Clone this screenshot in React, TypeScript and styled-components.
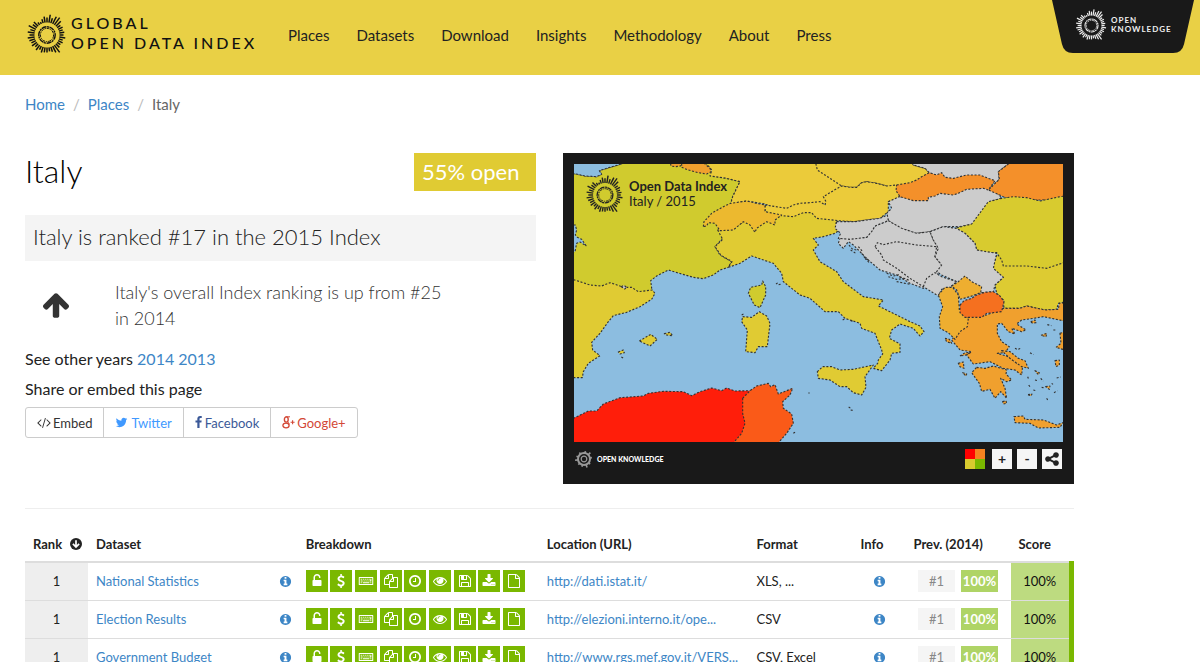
import React from 'react';
import styled, { createGlobalStyle } from 'styled-components';

const GlobalStyle = createGlobalStyle`
  *, *::before, *::after { box-sizing: border-box; }
  body {
    margin: 0;
    background: #fff;
    color: #222;
    font-family: Lato, 'Liberation Sans', sans-serif;
    font-size: 16px;
    line-height: 24px;
  }
  a { color: #3d86c6; text-decoration: none; }
  a:hover { text-decoration: underline; }
  h1, h2, p { margin: 0; }
`;

/* ---------- icons ---------- */

const glyphs = {
  info: 'M1152 1376v-160q0-14-9-23t-23-9h-96v-512q0-14-9-23t-23-9h-320q-14 0-23 9t-9 23v160q0 14 9 23t23 9h96v320h-96q-14 0-23 9t-9 23v160q0 14 9 23t23 9h448q14 0 23-9t9-23zm-128-896v-160q0-14-9-23t-23-9h-192q-14 0-23 9t-9 23v160q0 14 9 23t23 9h192q14 0 23-9t9-23zm640 416q0 209-103 385.5t-279.5 279.5-385.5 103-385.5-103-279.5-279.5-103-385.5 103-385.5 279.5-279.5 385.5-103 385.5 103 279.5 279.5 103 385.5z',
  up: 'M1675 971q0 51-37 90l-75 75q-38 38-91 38-54 0-90-38l-294-293v704q0 52-37.5 84.5t-90.5 32.5h-128q-53 0-90.5-32.5t-37.5-84.5v-704l-294 293q-36 38-90 38t-90-38l-75-75q-38-38-38-90 0-53 38-91l651-651q35-37 90-37 54 0 91 37l651 651q37 39 37 91z',
  twitter: 'M1684 408q-67 98-162 167 1 14 1 42 0 130-38 259.5t-115.5 248.5-184.5 210.5-258 146-323 54.5q-271 0-496-145 35 4 78 4 225 0 401-138-105-2-188-64.5t-114-159.5q33 5 61 5 43 0 85-11-112-23-185.5-111.5t-73.5-205.5v-4q68 38 146 41-66-44-105-115t-39-154q0-88 44-163 121 149 294.5 238.5t371.5 99.5q-8-38-8-74 0-134 94.5-228.5t228.5-94.5q140 0 236 102 109-21 205-78-37 115-142 178 93-10 186-50z',
  facebook: 'M1343 12v264h-157q-86 0-116 36t-30 108v189h293l-39 296h-254v759h-306v-759h-255v-296h255v-218q0-186 104-288.5t277-102.5q147 0 228 12z',
  share: 'M1344 1024q133 0 226.5 93.5t93.5 226.5-93.5 226.5-226.5 93.5-226.5-93.5-93.5-226.5q0-12 2-34l-360-180q-92 86-218 86-133 0-226.5-93.5t-93.5-226.5 93.5-226.5 226.5-93.5q126 0 218 86l360-180q-2-22-2-34 0-133 93.5-226.5t226.5-93.5 226.5 93.5 93.5 226.5-93.5 226.5-226.5 93.5q-126 0-218-86l-360 180q2 22 2 34t-2 34l360 180q92-86 218-86z',
  code: 'M617 1399l-50 50q-10 10-23 10t-23-10l-466-466q-10-10-10-23t10-23l466-466q10-10 23-10t23 10l50 50q10 10 10 23t-10 23l-393 393 393 393q10 10 10 23t-10 23zm591-1067l-373 1291q-4 13-15.5 19.5t-23.5 2.5l-62-17q-13-4-19.5-15.5t-2.5-24.5l373-1291q4-13 15.5-19.5t23.5-2.5l62 17q13 4 19.5 15.5t2.5 24.5zm657 651l-466 466q-10 10-23 10t-23-10l-50-50q-10-10-10-23t10-23l393-393-393-393q-10-10-10-23t10-23l50-50q10-10 23-10t23 10l466 466q10 10 10 23t-10 23z',
  unlock: 'M1376 768q40 0 68 28t28 68v576q0 40-28 68t-68 28h-960q-40 0-68-28t-28-68v-576q0-40 28-68t68-28h32v-320q0-185 131.5-316.5t316.5-131.5 316.5 131.5 131.5 316.5q0 26-19 45t-45 19h-64q-26 0-45-19t-19-45q0-106-75-181t-181-75-181 75-75 181v320h736z',
  dollar: 'M1362 1185q0 153-99.5 263.5t-258.5 136.5v175q0 14-9 23t-23 9h-135q-13 0-22.5-9.5t-9.5-22.5v-175q-66-9-127.5-31t-101.5-44.5-74-48-46.5-37.5-17.5-18q-17-21-2-41l103-135q7-10 23-12 15-2 24 9l2 2q113 99 243 125 37 8 74 8 81 0 142.5-43t61.5-122q0-28-15-53t-33.5-42-58.5-37.5-66-32-80-32.5q-39-16-61.5-25t-61.5-26.5-62.5-31-56.5-35.5-53.5-42.5-43.5-49-35.5-58-21-66.5-8.5-78q0-138 98-242t255-134v-180q0-13 9.5-22.5t22.5-9.5h135q14 0 23 9t9 23v176q57 6 110.5 23t87 33.5 63.5 37.5 39 29 15 14q17 18 5 38l-81 146q-8 15-23 16-14 3-27-7-3-3-14.5-12t-39-26.5-58.5-32-74.5-26-85.5-11.5q-95 0-155 43t-60 111q0 26 8.5 48t29.5 41.5 39.5 33 56 31 60.5 27 70 27.5q53 20 81 31.5t76 35 75.5 42.5 62 50 53 63.5 31.5 76.5 13 94z',
  keyboard: 'M-30 448q0-64 64-64h1724q64 0 64 64v896q0 64-64 64h-1724q-64 0-64-64zm128 64v768h1596v-768zM220 600h140v130h-140zM480 600h130v130h-130zM730 600h130v130h-130zM980 600h130v130h-130zM1230 600h130v130h-130zM1450 600h130v360h-240v-130h110zM220 830h240v130h-240zM590 830h130v130h-130zM840 830h130v130h-130zM1090 830h130v130h-130zM220 1060h140v130h-140zM480 1060h850v130h-850zM1440 1060h140v130h-140z',
  files: 'M1696 384q40 0 68 28t28 68v1216q0 40-28 68t-68 28h-960q-40 0-68-28t-28-68v-288h-544q-40 0-68-28t-28-68v-672q0-40 20-88t48-76l408-408q28-28 76-48t88-20h416q40 0 68 28t28 68v328q68-40 128-40h416zm-544 213l-299 299h299v-299zm-640-384l-299 299h299v-299zm196 647l316-316v-416h-384v416q0 40-28 68t-68 28h-416v640h512v-256q0-40 20-88t48-76zm956 804v-1152h-384v416q0 40-28 68t-68 28h-416v640h896z',
  clock: 'M1024 544v448q0 14-9 23t-23 9h-320q-14 0-23-9t-9-23v-64q0-14 9-23t23-9h224v-352q0-14 9-23t23-9h64q14 0 23 9t9 23zm416 352q0-148-73-273t-198-198-273-73-273 73-198 198-73 273 73 273 198 198 273 73 273-73 198-198 73-273zm224 0q0 209-103 385.5t-279.5 279.5-385.5 103-385.5-103-279.5-279.5-103-385.5 103-385.5 279.5-279.5 385.5-103 385.5 103 279.5 279.5 103 385.5z',
  eye: 'M1664 960q-152-236-381-353 61 104 61 225 0 185-131.5 316.5t-316.5 131.5-316.5-131.5-131.5-316.5q0-121 61-225-229 117-381 353 133 205 333.5 326.5t434.5 121.5 434.5-121.5 333.5-326.5zm-720-384q0-20-14-34t-34-14q-125 0-214.5 89.5t-89.5 214.5q0 20 14 34t34 14 34-14 14-34q0-86 61-147t147-61q20 0 34-14t14-34zm848 384q0 34-20 69-140 230-376.5 368.5t-499.5 138.5-499.5-139-376.5-368q-20-35-20-69t20-69q140-229 376.5-368t499.5-139 499.5 139 376.5 368q20 35 20 69z',
  floppy: 'M512 1536h768v-384h-768v384zm896 0h128v-896q0-14-10-38.5t-20-34.5l-281-281q-10-10-34-20t-39-10v416q0 40-28 68t-68 28h-576q-40 0-68-28t-28-68v-416h-128v1280h128v-416q0-40 28-68t68-28h832q40 0 68 28t28 68v416zm-384-928v-320q0-13-9.5-22.5t-22.5-9.5h-192q-13 0-22.5 9.5t-9.5 22.5v320q0 13 9.5 22.5t22.5 9.5h192q13 0 22.5-9.5t9.5-22.5zm640 32v928q0 40-28 68t-68 28h-1344q-40 0-68-28t-28-68v-1344q0-40 28-68t68-28h928q40 0 88 20t76 48l280 280q28 28 48 76t20 88z',
  download: 'M1344 1344q0-26-19-45t-45-19-45 19-19 45 19 45 45 19 45-19 19-45zm256 0q0-26-19-45t-45-19-45 19-19 45 19 45 45 19 45-19 19-45zm128-224v320q0 40-28 68t-68 28h-1472q-40 0-68-28t-28-68v-320q0-40 28-68t68-28h465l135 136q58 56 136 56t136-56l136-136h464q40 0 68 28t28 68zm-325-569q17 41-14 70l-448 448q-18 19-45 19t-45-19l-448-448q-31-29-14-70 17-39 59-39h256v-448q0-26 19-45t45-19h256q26 0 45 19t19 45v448h256q42 0 59 39z',
  file: 'M1596 380q28 28 48 76t20 88v1152q0 40-28 68t-68 28h-1344q-40 0-68-28t-28-68v-1600q0-40 28-68t68-28h896q40 0 88 20t76 48zm-444-244v376h376q-10-29-22-41l-313-313q-12-12-41-22zm384 1528v-1024h-416q-40 0-68-28t-28-68v-416h-768v1536h1280z',
};

type GlyphName = keyof typeof glyphs;

const Svg = styled.svg<{ $size: number; $width?: number }>`
  display: block;
  flex: none;
  width: ${(p) => p.$width ?? p.$size}px;
  height: ${(p) => p.$size}px;
  fill: currentColor;
  overflow: visible;
`;

const Icon = ({ name, size, width }: { name: GlyphName; size: number; width?: number }) => (
  <Svg $size={size} $width={width} viewBox="0 0 1792 1792" preserveAspectRatio="xMidYMid slice" aria-hidden="true">
    <path fillRule="evenodd" d={glyphs[name]} />
  </Svg>
);

const SortDown = () => (
  <Svg $size={12} viewBox="0 0 12 12" aria-hidden="true">
    <circle cx="6" cy="6" r="6" />
    <path d="M6 2.2V9M2.9 5.8 6 9l3.1-3.2" fill="none" stroke="#fff" strokeWidth="1.7" />
  </Svg>
);

const GoogleMark = () => (
  <Svg $size={13} $width={12} viewBox="0 0 12 13" aria-hidden="true">
    <g fill="none" stroke="currentColor">
      <ellipse cx="4.3" cy="3.5" rx="1.9" ry="2.6" strokeWidth="1.4" />
      <path d="M3.6 .8H8M5.5 5.8q1.8 1.4 1.8 2.6" strokeWidth="1" />
      <ellipse cx="4" cy="9.5" rx="3.1" ry="2.3" strokeWidth="1.3" />
      <path d="M8.6 6.2h4M10.6 4.2v4" strokeWidth="1.1" />
    </g>
  </Svg>
);

const rays = [5, 8, 5, 8, 9, 7, 4, 5, 4, 5, 4, 6, 4, 5, 4, 5, 9, 7, 5, 4, 5, 5, 6, 4, 6, 4, 6, 5, 6, 7, 5, 7, 5, 8, 5, 6, 3, 2, 4, 6];

const Sunburst = ({ size }: { size: number }) => (
  <Svg $size={size} viewBox="-22 -22 44 44" aria-hidden="true">
    <g fill="none" stroke="currentColor">
      <circle r="8.2" strokeWidth="1.4" strokeDasharray="5 .7 2 .5" />
      <circle r="6.6" strokeWidth="1" strokeDasharray="3 .9 1.4 .8" />
      {rays.map((length, i) => (
        <path key={i} d={`M0 -12.5V${-12.5 - length}`} strokeWidth="1.5" transform={`rotate(${(i * 360) / rays.length})`} />
      ))}
    </g>
  </Svg>
);

const GearMark = () => (
  <Svg $size={18} viewBox="-9 -9 18 18" aria-hidden="true">
    <g fill="none" stroke="currentColor">
      <circle r="6" strokeWidth="2" />
      <circle r="2.8" strokeWidth="1.2" />
      {[10, 45, 80, 130, 160, 195, 225, 262, 290, 325].map((a, i) => (
        <path key={a} d={`M0 -6V${i % 3 === 1 ? -9 : -8}`} strokeWidth="1.6" transform={`rotate(${a})`} />
      ))}
    </g>
  </Svg>
);

/* ---------- header ---------- */

const Header = styled.header`
  display: flex;
  align-items: flex-start;
  min-height: 75px;
  padding-left: 25px;
  background: #e9d045;
`;

const Brand = styled.a`
  display: flex;
  align-items: flex-start;
  gap: 2px;
  padding-top: 13px;
  color: #111;
  font-weight: 500;
  font-size: 16px;
  line-height: 20px;
  letter-spacing: 3px;
  white-space: nowrap;
`;

const Nav = styled.nav`
  display: flex;
  gap: 27px;
  margin-left: 31px;
  padding-top: 23px;
  font-size: 15px;
`;

const NavLink = styled.a`
  color: #222;
`;

const Tab = styled.a`
  position: relative;
  display: flex;
  align-items: center;
  width: 143px;
  height: 53px;
  margin: 0 5px 0 auto;
  padding: 0 0 3px 22px;
  color: #eee;
  font-size: 8px;
  font-weight: 700;
  line-height: 9px;
  letter-spacing: 1px;
`;

const TabShape = styled.svg`
  position: absolute;
  inset: 0;
  width: 100%;
  height: 100%;
`;

const TabContent = styled.span`
  position: relative;
  display: flex;
  align-items: center;
  gap: 2px;
`;

/* ---------- page ---------- */

const Page = styled.main`
  max-width: 1099px;
  padding: 0 25px;
`;

const Breadcrumb = styled.ol`
  display: flex;
  margin: 0;
  padding: 17px 0 1px;
  list-style: none;
  font-size: 15px;
`;

const Crumb = styled.li`
  color: #666;
  & + &::before {
    content: '/';
    padding: 0 8px;
    color: #bbb;
  }
`;

const Overview = styled.div`
  display: grid;
  grid-template-columns: 1fr 1fr;
  gap: 27px;
  align-items: start;
  padding: 36px 0 24px;
  border-bottom: 1px solid #eee;
`;

const TitleRow = styled.div`
  display: flex;
  justify-content: space-between;
  align-items: flex-start;
`;

const Title = styled.h1`
  color: #000;
  font-weight: 300;
  font-size: 32px;
  line-height: 36px;
`;

const OpenScore = styled.span`
  width: 122px;
  padding: 0 8px;
  background: #e0cb33;
  color: #fff;
  font-size: 22px;
  line-height: 38px;
`;

const RankBanner = styled.h2`
  margin-top: 24px;
  padding: 0 8px 2px;
  background: #f4f4f4;
  font-weight: 300;
  font-size: 22px;
  line-height: 44px;
`;

const Trend = styled.div`
  display: flex;
  align-items: center;
  gap: 44px;
  margin-top: 18px;
  padding-left: 16px;
  color: #333;
`;

const TrendText = styled.p`
  max-width: 340px;
  font-weight: 300;
  font-size: 18px;
  line-height: 26px;
`;

const Years = styled.p`
  margin-top: 16px;
`;

const ShareLabel = styled.p`
  margin-top: 6px;
`;

const ShareGroup = styled.div`
  display: inline-flex;
  margin-top: 6px;
  border: 1px solid #ccc;
  border-radius: 3px;
`;

const ShareButton = styled.button<{ $color: string }>`
  display: flex;
  align-items: center;
  gap: 3px;
  height: 29px;
  padding: 0 11px;
  border: 0;
  background: none;
  color: ${(p) => p.$color};
  font: inherit;
  font-size: 13px;
  cursor: pointer;
  & + & { border-left: 1px solid #ccc; }
`;

/* ---------- map ---------- */

const MapPanel = styled.section`
  position: relative;
  padding: 11px 11px 0;
  background: #191919;
`;

const MapSvg = styled.svg`
  display: block;
  width: 100%;
  background: #8cbde0;
`;

const MapCaption = styled.div`
  position: absolute;
  top: 21px;
  left: 21px;
  display: flex;
  align-items: center;
  gap: 3px;
  color: #222;
  font-size: 13px;
  line-height: 15px;
`;

const CaptionText = styled.span`
  padding-bottom: 3px;
`;

const MapFooter = styled.div`
  display: flex;
  align-items: center;
  gap: 5px;
  height: 42px;
  padding: 0 1px 8px;
`;

const FooterBrand = styled.a`
  display: flex;
  align-items: center;
  gap: 4px;
  margin-right: auto;
  color: #999;
  font-size: 7px;
  font-weight: 900;
  & > span { color: #fff; }
`;

const MapButton = styled.button`
  display: grid;
  place-items: center;
  width: 20px;
  height: 20px;
  padding: 0;
  border: 0;
  background: #f5f5f5;
  color: #222;
  font: inherit;
  font-size: 14px;
  font-weight: 700;
  line-height: 20px;
`;

const LegendButton = styled(MapButton)`
  margin-right: 2px;
  background: conic-gradient(#f58220 90deg, #7ab800 90deg 180deg, #d8cb2f 180deg 270deg, #ff0000 270deg);
`;

const yellow = '#e0cb33';
const olive = '#d0cb2e';
const gold = '#ebcb3a';
const amber = '#f0a02e';
const grey = '#cccccc';
const sea = '#8cbde0';

const lands: [string, string][] = [
  [olive, '30,68 75,78 110,80 125,73 118,62 150,52 190,40 190,30 440,30 460,78 500,85 540,95 530,115 518,140 512,162 560,155 560,250 488,265 465,290 480,315 515,335 505,352 480,360 460,375 430,386 400,382 365,372 325,360 290,378 272,392 277,430 250,460 30,460'],
  [sea, '30,225 46,225 50,240 46,255 52,262 65,268 78,287 60,276 50,280 45,305 30,308'],
  [yellow, '30,386 60,395 90,405 125,408 150,398 180,408 195,412 215,412 235,425 277,420 285,430 275,448 240,470 200,487 160,497 145,515 120,550 95,577 98,600 120,617 85,640 70,665 67,683 30,683'],
  [yellow, '473,240 488,268 465,290 482,315 516,335 505,352 540,340 575,318 640,340 665,370 670,395 720,435 750,445 795,485 835,485 855,505 900,520 905,535 945,550 965,600 968,612 955,630 953,640 940,655 965,662 990,630 995,610 1020,607 1020,582 988,565 995,540 1020,522 1060,535 1080,558 1092,545 1080,528 1050,515 990,485 955,468 970,450 910,440 850,395 830,365 780,335 760,300 775,285 760,265 790,260 825,250 838,240 828,220 840,190 620,170 520,235'],
  [gold, '430,30 455,60 450,78 500,85 540,95 530,115 518,140 512,162 560,153 615,162 680,190 755,180 820,150 860,100 780,30'],
  [amber, '330,30 333,48 345,50 362,48 365,30'],
  [amber, '365,30 365,52 385,60 415,68 440,72 453,65 450,55 435,42 435,30'],
  [gold, '765,30 772,60 810,85 845,108 870,112 890,112 905,98 920,95 950,100 980,108 1010,115 1060,100 1108,68 1095,55 1060,45 1045,30'],
  [gold, '615,165 680,175 700,165 720,160 750,158 780,155 795,165 798,155 790,140 820,122 845,108 870,112 890,112 905,98 920,95 950,100 980,108 1010,105 1018,140 1005,150 985,155 985,185 960,205 920,210 885,215 845,213 770,205 755,188 730,188 700,200 640,195 615,185'],
  ['#ecb92f', '430,230 432,215 455,190 490,170 512,160 560,153 590,160 615,165 615,185 665,195 645,210 645,225 620,215 600,228 590,235 585,247 570,225 550,215 520,240 480,242 465,220 445,218 440,228'],
  [grey, '1050,30 1060,45 1095,55 1108,68 1145,82 1200,95 1305,100 1318,88 1315,65 1345,42 1345,30'],
  [grey, '1018,140 1070,140 1220,105 1295,110 1325,145 1290,155 1240,222 1200,230 1150,230 1110,245 1070,250 1020,235 985,212 980,190 995,175 985,155'],
  ['#f4902a', '1345,30 1345,42 1315,65 1318,88 1285,120 1330,140 1360,150 1509,150 1520,30'],
  ['#f4902a', '1010,105 1050,98 1070,90 1085,80 1108,68 1130,75 1145,68 1155,82 1180,85 1220,75 1260,75 1285,85 1305,92 1285,120 1270,115 1220,118 1195,130 1180,135 1140,130 1125,138 1105,142 1105,152 1060,152 1020,140 1008,122'],
  ['#ddcb32', '1310,315 1300,345 1302,360 1330,382 1305,405 1310,430 1330,450 1332,475 1380,475 1400,468 1455,480 1490,478 1495,460 1520,455 1520,330 1325,320'],
  ['#d8cb2f', '1325,145 1285,155 1235,222 1185,235 1215,250 1245,280 1250,300 1280,308 1310,308 1325,330 1330,348 1400,348 1460,355 1520,335 1520,137 1490,142 1440,153 1400,143 1360,140'],
  [grey, '840,265 920,262 945,228 985,212 1025,235 1070,250 1110,245 1120,270 1135,290 1145,345 1130,375 1090,415 1050,400 1010,375 960,360 925,330 880,285 865,275 850,295 835,280'],
  [grey, '830,215 885,215 920,210 960,205 982,195 985,212 945,228 935,245 920,262 870,268 835,265 842,250 825,235'],
  [grey, '945,290 952,278 970,284 1010,275 1070,285 1130,290 1125,320 1145,345 1130,375 1090,410 1050,385 1010,355 970,330 965,315'],
  [grey, '1110,245 1150,230 1190,235 1215,250 1245,280 1250,300 1310,310 1300,355 1330,382 1305,405 1300,425 1265,428 1215,400 1190,395 1145,375 1130,365 1145,345 1125,320 1135,295 1120,270'],
  [grey, '1090,410 1100,385 1125,368 1145,380 1190,395 1170,412 1145,418 1135,438'],
  [amber, '1175,570 1200,600 1235,605 1220,615 1240,642 1290,635 1330,655 1365,660 1385,675 1388,645 1370,640 1345,620 1312,610 1335,608 1348,590 1325,575 1312,550 1312,522 1325,520 1345,545 1365,552 1355,535 1385,545 1398,540 1370,522 1385,510 1420,505 1450,500 1509,512 1520,500 1520,458 1498,460 1495,478 1455,480 1400,468 1380,475 1332,475 1280,495 1225,500 1205,530'],
  ['#eeae30', '1175,408 1195,395 1215,378 1235,395 1265,410 1262,428 1230,440 1200,448 1190,420'],
  ['#eeae30', '1135,435 1155,412 1178,412 1195,435 1198,480 1225,505 1222,530 1200,545 1185,568 1165,548 1140,535 1138,500 1148,470'],
  ['#f5701f', '1200,465 1212,452 1235,445 1250,435 1275,427 1300,425 1320,438 1332,455 1325,485 1300,488 1280,490 1265,502 1250,502 1215,502 1200,488'],
  [amber, '1250,652 1275,655 1300,648 1340,660 1338,672 1355,690 1340,695 1322,685 1335,715 1340,745 1322,725 1305,745 1290,718 1265,724 1258,700 1235,668'],
  [amber, '1325,602 1350,605 1375,625 1395,632 1405,655 1385,650 1350,625'],
  [amber, '1362,800 1390,798 1395,808 1450,810 1490,825 1509,818 1500,832 1435,834 1410,820 1365,818'],
  [olive, '608,393 617,410 617,435 600,473 583,465 565,430 572,412 605,405'],
  [yellow, '548,500 575,502 598,485 620,498 630,520 622,590 595,590 585,608 557,605 562,540 545,515'],
  [yellow, '238,573 272,553 292,568 270,588'],
  [yellow, '175,606 190,600 193,608 180,612'],
  [yellow, '313,551 330,547 338,557 320,555'],
  [yellow, '772,665 788,650 815,650 840,660 880,658 940,645 915,680 918,712 905,735 880,728 860,710 840,710 810,690 775,685'],
  ['#ff1e0a', '30,810 85,783 110,783 130,762 180,743 250,738 265,730 310,724 370,725 395,737 420,725 455,714 485,722 500,714 525,723 575,722 575,890 30,890'],
  ['#fa5a18', '548,745 570,722 590,708 625,700 632,710 645,704 655,732 698,715 690,735 668,755 670,775 695,792 700,820 680,850 645,890 510,890 545,850 555,820 548,790'],
  [amber, '1200,618 1215,608 1230,608 1218,615'],
  [amber, '1195,640 1210,636 1212,655 1200,650'],
  [amber, '1208,668 1220,672 1218,678'],
  [amber, '1155,565 1168,568 1175,580 1160,575'],
  [amber, '1328,755 1338,752 1340,760 1330,762'],
  [amber, '1412,515 1425,510 1428,518 1418,520'],
  [amber, '1443,556 1460,550 1458,560'],
  [amber, '1500,550 1515,545 1515,600 1488,592 1503,580'],
  [amber, '1485,632 1498,630 1498,645 1488,650'],
  [amber, '1425,662 1438,668 1435,674'],
  [amber, '1457,710 1470,708 1468,718'],
  [amber, '1404,734 1416,732 1412,738'],
];

const seaCorner = '30,30 190,30 185,42 150,52 118,62 125,73 110,80 75,78 30,68';

const islets =
  'M867 285l10 12 12 3M872 300l18 12 M895 290l12 14 M905 310l10 14 14 8 M915 325l14 14 M980 370l20 8 18-4M985 380l24 8 24-2M1010 395l20 4 22 4M1020 380l30 12M648 402l6-4M656 404l8-2M184 621l8 4M545 495l6-3M700 850l8-5M745 729l4 0M866 771l6 4M872 780l10 2M848 510l5-3M872 512l8 2M1365 595l8 4M1375 598l10-4M1410 608l10 6M1462 524l12 3M1480 540l8 0M1403 680l4 10M1425 690l8 2M1442 685l8 8M1406 705l5 6M1445 712l8 2M1420 720l8 2M1482 728l10-6M1460 745l4 7M1490 684l12-3M1475 700l4 3';

const EuropeMap = () => (
  <MapSvg viewBox="42 42 1467 834" role="img" aria-label="Openness of Italy and its neighbours">
    <g stroke="#333" strokeWidth="3.4" strokeDasharray="6 5" strokeLinejoin="round">
      {lands.map(([fill, points], i) => (
        <polygon key={i} fill={fill} points={points} />
      ))}
      <polygon fill={sea} points={seaCorner} />
      <path d={islets} fill="none" />
      <path d="M184 410l8-4 8 6-6 5z" fill={grey} />
    </g>
  </MapSvg>
);

/* ---------- table ---------- */

const DataTable = styled.table`
  width: 100%;
  margin-top: 16px;
  border-collapse: collapse;
  table-layout: fixed;
  font-size: 13px;
  line-height: 20px;
`;

const HeadCell = styled.th<{ $width?: number }>`
  ${(p) => p.$width && `width: ${p.$width}px;`}
  height: 37px;
  padding: 2px 8px 0;
  border-bottom: 2px solid #ddd;
  text-align: left;
  font-weight: 700;
  white-space: nowrap;
`;

const SortButton = styled.button`
  display: flex;
  align-items: center;
  justify-content: space-between;
  width: 49px;
  padding: 0;
  border: 0;
  background: none;
  color: inherit;
  font: inherit;
`;

const Cell = styled.td<{ $kind?: 'rank' | 'center' | 'score' }>`
  height: 38px;
  padding: 0 8px;
  border-bottom: 1px solid #ddd;
  white-space: nowrap;
  ${(p) => p.$kind && 'text-align: center;'}
  ${(p) => p.$kind === 'rank' && 'background: #eee;'}
  ${(p) => p.$kind === 'score' && 'background: #bddb80; color: #111; border-right: 5px solid #7ab800;'}
`;

const NameCell = styled(Cell)`
  padding-right: 6px;
`;

const DatasetName = styled.div`
  display: flex;
  align-items: center;
  justify-content: space-between;
`;

const InfoLink = styled.a`
  display: block;
`;

const InfoDetails = styled.div`
  display: flex;
  justify-content: center;
`;

const Breakdown = styled.div`
  display: flex;
  justify-content: space-between;
  max-width: 219px;
`;

const Check = styled.span`
  display: grid;
  place-items: center;
  width: 22px;
  height: 22px;
  background: #7ab800;
  color: #fff;
`;

const Previous = styled.div`
  display: flex;
  justify-content: center;
  gap: 6px;
`;

const PrevBadge = styled.span<{ $score?: boolean }>`
  width: 37px;
  line-height: 22px;
  background: ${(p) => (p.$score ? '#afd466' : '#f5f5f5')};
  color: ${(p) => (p.$score ? '#fff' : '#888')};
  font-weight: ${(p) => (p.$score ? 700 : 400)};
`;

const checks: [GlyphName, string][] = [
  ['unlock', 'Openly licensed'],
  ['dollar', 'Free of charge'],
  ['keyboard', 'Machine readable'],
  ['files', 'Available in bulk'],
  ['clock', 'Up to date'],
  ['eye', 'Publicly available'],
  ['floppy', 'Digital form'],
  ['download', 'Available online'],
  ['file', 'Data exists'],
];

const rows = [
  { name: 'National Statistics', url: 'http://dati.istat.it/', format: 'XLS, ...' },
  { name: 'Election Results', url: 'http://elezioni.interno.it/ope...', format: 'CSV' },
  { name: 'Government Budget', url: 'http://www.rgs.mef.gov.it/VERS...', format: 'CSV, Excel' },
];

const navItems = ['Places', 'Datasets', 'Download', 'Insights', 'Methodology', 'About', 'Press'];

export default function App() {
  return (
    <>
      <GlobalStyle />
      <Header>
        <Brand href="#">
          <Sunburst size={44} />
          <span>
            GLOBAL
            <br />
            OPEN DATA INDEX
          </span>
        </Brand>
        <Nav>
          {navItems.map((item) => (
            <NavLink key={item} href="#">
              {item}
            </NavLink>
          ))}
        </Nav>
        <Tab href="#">
          <TabShape viewBox="0 0 144 53" preserveAspectRatio="none" aria-hidden="true">
            <path d="M0 0H143L133 44Q131 53 122 53H21Q12 53 10 44Z" fill="#191919" />
          </TabShape>
          <TabContent>
            <Sunburst size={35} />
            <span>
              OPEN
              <br />
              KNOWLEDGE
            </span>
          </TabContent>
        </Tab>
      </Header>

      <Page>
        <Breadcrumb>
          <Crumb>
            <a href="#">Home</a>
          </Crumb>
          <Crumb>
            <a href="#">Places</a>
          </Crumb>
          <Crumb>Italy</Crumb>
        </Breadcrumb>

        <Overview>
          <section>
            <TitleRow>
              <Title>Italy</Title>
              <OpenScore>55% open</OpenScore>
            </TitleRow>
            <RankBanner>Italy is ranked #17 in the 2015 Index</RankBanner>
            <Trend>
              <Icon name="up" size={30} />
              <TrendText>Italy's overall Index ranking is up from #25 in 2014</TrendText>
            </Trend>
            <Years>
              See other years <a href="#">2014</a> <a href="#">2013</a>
            </Years>
            <ShareLabel>Share or embed this page</ShareLabel>
            <ShareGroup>
              <ShareButton $color="#333">
                <Icon name="code" size={13} />
                Embed
              </ShareButton>
              <ShareButton $color="#4099ff">
                <Icon name="twitter" size={13} />
                Twitter
              </ShareButton>
              <ShareButton $color="#3b5998">
                <Icon name="facebook" size={13} width={7} />
                Facebook
              </ShareButton>
              <ShareButton $color="#d34836">
                <GoogleMark />
                Google+
              </ShareButton>
            </ShareGroup>
          </section>

          <MapPanel>
            <EuropeMap />
            <MapCaption>
              <Sunburst size={42} />
              <CaptionText>
                <b>Open Data Index</b>
                <br />
                Italy / 2015
              </CaptionText>
            </MapCaption>
            <MapFooter>
              <FooterBrand href="#">
                <GearMark />
                <span>OPEN KNOWLEDGE</span>
              </FooterBrand>
              <LegendButton aria-label="Legend" />
              <MapButton>+</MapButton>
              <MapButton>-</MapButton>
              <MapButton aria-label="Share">
                <Icon name="share" size={16} />
              </MapButton>
            </MapFooter>
          </MapPanel>
        </Overview>

        <DataTable>
          <thead>
            <tr>
              <HeadCell $width={63}>
                <SortButton>
                  Rank <SortDown />
                </SortButton>
              </HeadCell>
              <HeadCell>Dataset</HeadCell>
              <HeadCell $width={241}>Breakdown</HeadCell>
              <HeadCell>Location (URL)</HeadCell>
              <HeadCell $width={104}>Format</HeadCell>
              <HeadCell $width={53}>Info</HeadCell>
              <HeadCell $width={105}>Prev. (2014)</HeadCell>
              <HeadCell $width={61}>Score</HeadCell>
            </tr>
          </thead>
          <tbody>
            {rows.map((row) => (
              <tr key={row.name}>
                <Cell $kind="rank">1</Cell>
                <NameCell>
                  <DatasetName>
                    <a href="#">{row.name}</a>
                    <InfoLink href="#" aria-label={`About ${row.name}`}>
                      <Icon name="info" size={13} />
                    </InfoLink>
                  </DatasetName>
                </NameCell>
                <Cell>
                  <Breakdown>
                    {checks.map(([icon, label]) => (
                      <Check key={icon} title={label}>
                        <Icon name={icon} size={14} />
                      </Check>
                    ))}
                  </Breakdown>
                </Cell>
                <Cell>
                  <a href="#">{row.url}</a>
                </Cell>
                <Cell>{row.format}</Cell>
                <Cell>
                  <InfoDetails>
                    <InfoLink href="#" aria-label={`Details of ${row.name}`}>
                      <Icon name="info" size={13} />
                    </InfoLink>
                  </InfoDetails>
                </Cell>
                <Cell $kind="center">
                  <Previous>
                    <PrevBadge>#1</PrevBadge>
                    <PrevBadge $score>100%</PrevBadge>
                  </Previous>
                </Cell>
                <Cell $kind="score">100%</Cell>
              </tr>
            ))}
          </tbody>
        </DataTable>
      </Page>
    </>
  );
}
